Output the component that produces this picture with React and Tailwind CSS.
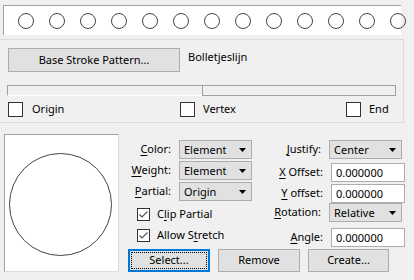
import React from 'react'

const font = "font-['Noto_Sans',sans-serif]"

function Arrow() {
  return (
    <svg width="7" height="4" viewBox="0 0 7 4" className="shrink-0">
      <path d="M0 0H7L3.5 4Z" fill="#000" />
    </svg>
  )
}

function Dropdown({ value, w = 'w-[73px]', h = 'h-[19px]' }) {
  return (
    <div className={`${w} ${h} flex items-center justify-between bg-[#e1e1e1] border border-[#adadad] pl-[4px] pr-[5px]`}>
      <span className="leading-none">{value}</span>
      <Arrow />
    </div>
  )
}

function Field({ value }) {
  return (
    <div className="w-[74px] h-[19px] flex items-center bg-white border border-[#adadad] pl-[4px]">
      <span className="leading-none">{value}</span>
    </div>
  )
}

function Check({ checked, size = 'w-[13px] h-[13px]' }) {
  return (
    <div className={`${size} shrink-0 border border-[#333] bg-white flex items-center justify-center`}>
      {checked && (
        <svg width="11" height="11" viewBox="0 0 11 11">
          <path d="M1.5 5.5L4 8L9.5 2.5" fill="none" stroke="#555" strokeWidth="1.2" />
        </svg>
      )}
    </div>
  )
}

function U({ children }) {
  return <span className="underline underline-offset-[2px]">{children}</span>
}

export default function App() {
  const dots = Array.from({ length: 13 })
  return (
    <div className={`w-[414px] h-[280px] bg-[#f0f0f0] text-[11px] text-black overflow-hidden ${font}`}>
      {/* pattern strip */}
      <div className="pt-[5px] pl-[3px]">
        <div className="w-[398px] h-[30px] bg-white border-t border-l border-[#a0a0a0] flex items-center pl-[14px] gap-[15px]">
          {dots.map((_, i) => (
            <svg key={i} width="16" height="16" viewBox="0 0 16 16" className="shrink-0">
              <circle cx="8" cy="8" r="7.5" fill="none" stroke="#444" strokeWidth="1" />
            </svg>
          ))}
        </div>
      </div>

      {/* group */}
      <div className="mt-[4px] w-[404px] h-[84px] border-t border-r border-b border-[#dcdcdc] pl-[8px] pt-[8px]">
        <div className="flex items-start">
          <button className="w-[172px] h-[24px] bg-[#e1e1e1] border border-[#adadad] flex items-center justify-center">
            Base Stroke Pattern...
          </button>
          <span className="ml-[8px] mt-[1px]">Bolletjeslijn</span>
        </div>
        <div className="mt-[13px] ml-[-1px] w-[389px] h-[11px] flex">
          <div className="w-[195px] h-full border-t border-l border-[#a0a0a0] border-b border-b-white" />
          <div className="flex-1 h-full border border-[#a0a0a0]" />
        </div>
        <div className="mt-[6px] flex items-center h-[15px]">
          <div className="w-[172px] flex items-center">
            <Check size="w-[15px] h-[15px]" />
            <span className="ml-[9px]">Origin</span>
          </div>
          <div className="flex items-center flex-1">
            <Check size="w-[15px] h-[15px]" />
            <span className="ml-[8px]">Vertex</span>
          </div>
          <div className="flex items-center w-[57px]">
            <Check size="w-[15px] h-[15px]" />
            <span className="ml-[8px]">End</span>
          </div>
        </div>
      </div>

      {/* bottom */}
      <div className="mt-[11px] flex items-start">
        <div className="ml-[4px] w-[115px] h-[138px] bg-white border-t border-l border-[#a0a0a0] border-r border-b border-r-[#dcdcdc] border-b-[#dcdcdc]">
          <svg width="113" height="136" viewBox="0 0 113 136">
            <circle cx="55.5" cy="69.5" r="51" fill="none" stroke="#444" strokeWidth="1" />
          </svg>
        </div>

        <div className="pt-[6px] flex flex-col">
          <div className="flex">
            {/* middle column */}
            <div className="w-[133px] flex flex-col">
              <div className="flex items-center">
                <span className="w-[52px] text-right"><U>C</U>olor:</span>
                <div className="ml-[8px]"><Dropdown value="Element" /></div>
              </div>
              <div className="mt-[2px] flex items-center">
                <span className="w-[52px] text-right"><U>W</U>eight:</span>
                <div className="ml-[8px]"><Dropdown value="Element" /></div>
              </div>
              <div className="mt-[2px] flex items-center">
                <span className="w-[52px] text-right"><U>P</U>artial:</span>
                <div className="ml-[8px]"><Dropdown value="Origin" /></div>
              </div>
              <div className="mt-[7px] ml-[18px] flex items-center h-[13px]">
                <Check checked />
                <span className="ml-[7px]">C<U>l</U>ip Partial</span>
              </div>
              <div className="mt-[8px] ml-[18px] flex items-center h-[13px]">
                <Check checked />
                <span className="ml-[7px]">Allow S<U>t</U>retch</span>
              </div>
            </div>

            {/* right column */}
            <div className="flex flex-col">
              <div className="flex items-center">
                <span className="w-[69px] text-right"><U>J</U>ustify:</span>
                <div className="ml-[8px]"><Dropdown value="Center" /></div>
              </div>
              <div className="mt-[4px] flex items-center">
                <span className="w-[71px] text-right"><U>X</U> Offset:</span>
                <div className="ml-[8px]"><Field value="0.000000" /></div>
              </div>
              <div className="mt-[2px] flex items-center">
                <span className="w-[71px] text-right"><U>Y</U> offset:</span>
                <div className="ml-[8px]"><Field value="0.000000" /></div>
              </div>
              <div className="flex items-center">
                <span className="w-[69px] text-right"><U>R</U>otation:</span>
                <div className="ml-[8px]"><Dropdown value="Relative" /></div>
              </div>
              <div className="mt-[6px] flex items-center">
                <span className="w-[71px] text-right"><U>A</U>ngle:</span>
                <div className="ml-[8px]"><Field value="0.000000" /></div>
              </div>
            </div>
          </div>

          <div className="mt-[2px] ml-[9px] flex gap-[8px]">
            <button className="w-[82px] h-[23px] bg-[#e1e1e1] border-2 border-[#0078d7] p-[1px]">
              <div className="w-full h-full border border-dotted border-black flex items-center justify-center">
                Select...
              </div>
            </button>
            <button className="w-[82px] h-[23px] bg-[#e1e1e1] border border-[#adadad] flex items-center justify-center">
              Remove
            </button>
            <button className="w-[81px] h-[23px] bg-[#e1e1e1] border border-[#adadad] flex items-center justify-center">
              Create...
            </button>
          </div>
        </div>
      </div>
    </div>
  )
}
